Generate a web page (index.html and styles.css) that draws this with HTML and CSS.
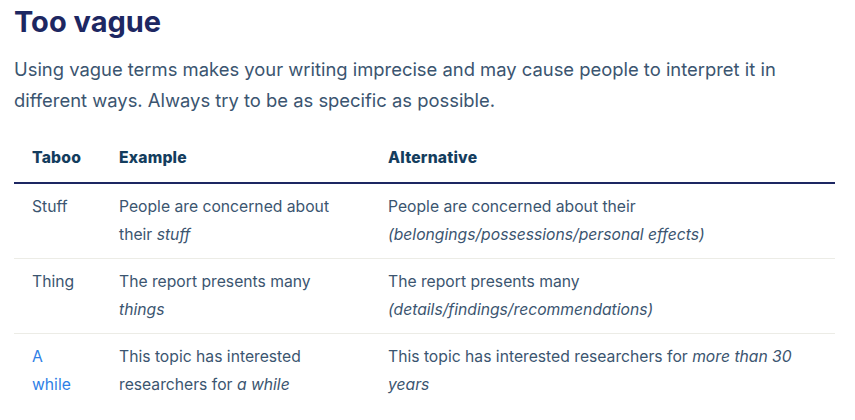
FILE: index.html
```html
<!DOCTYPE html>
<html lang="en">
<head>
<meta charset="utf-8">
<title>Too vague</title>
<link rel="stylesheet" href="styles.css">
</head>
<body>
<h1 class="title">Too vague</h1>
<p class="intro">Using vague terms makes your writing imprecise and may cause people to interpret it in different ways. Always try to be as specific as possible.</p>
<table class="taboo-table">
  <colgroup>
    <col class="col-taboo">
    <col class="col-example">
    <col class="col-alt">
  </colgroup>
  <thead>
    <tr><th>Taboo</th><th>Example</th><th>Alternative</th></tr>
  </thead>
  <tbody>
    <tr>
      <td>Stuff</td>
      <td>People are concerned about their <em>stuff</em></td>
      <td>People are concerned about their <em>(belongings/possessions/personal effects)</em></td>
    </tr>
    <tr>
      <td>Thing</td>
      <td>The report presents many <em>things</em></td>
      <td>The report presents many <em>(details/findings/recommendations)</em></td>
    </tr>
    <tr>
      <td><a class="link" href="#">A while</a></td>
      <td>This topic has interested researchers for <em>a while</em></td>
      <td>This topic has interested researchers for <em>more than 30 years</em></td>
    </tr>
  </tbody>
</table>
</body>
</html>
```
FILE: styles.css
```css
html, body {
  margin: 0;
  padding: 0;
  background: #ffffff;
}
body {
  padding: 0 14px;
  font-family: Inter, "Liberation Sans", sans-serif;
  color: #3b5570;
}
.title {
  margin: 4px 0 0;
  font-size: 29px;
  line-height: 36px;
  font-weight: 700;
  color: #1d2762;
  letter-spacing: 0;
}
.intro {
  margin: 14px 0 0;
  max-width: 821px;
  font-size: 18.4px;
  line-height: 31px;
  color: #3b5570;
}
.taboo-table {
  margin-top: 10px;
  width: 821px;
  border-collapse: collapse;
  table-layout: fixed;
  font-size: 15.7px;
  line-height: 28px;
}
.col-taboo { width: 87px; }
.col-example { width: 269px; }
.col-alt { width: 465px; }
.taboo-table th {
  text-align: left;
  font-weight: 800;
  color: #143d5e;
  padding: 18px 18px 10px;
  border-bottom: 2px solid #1d2762;
  letter-spacing: 0.2px;
}
.taboo-table td {
  vertical-align: top;
  padding: 9px 18px;
  border-bottom: 1px solid #ecece6;
}
.taboo-table tbody tr:last-child td {
  border-bottom: none;
}
.taboo-table em {
  font-style: italic;
}
.link {
  color: #2f7fe6;
  text-decoration: none;
}
```
